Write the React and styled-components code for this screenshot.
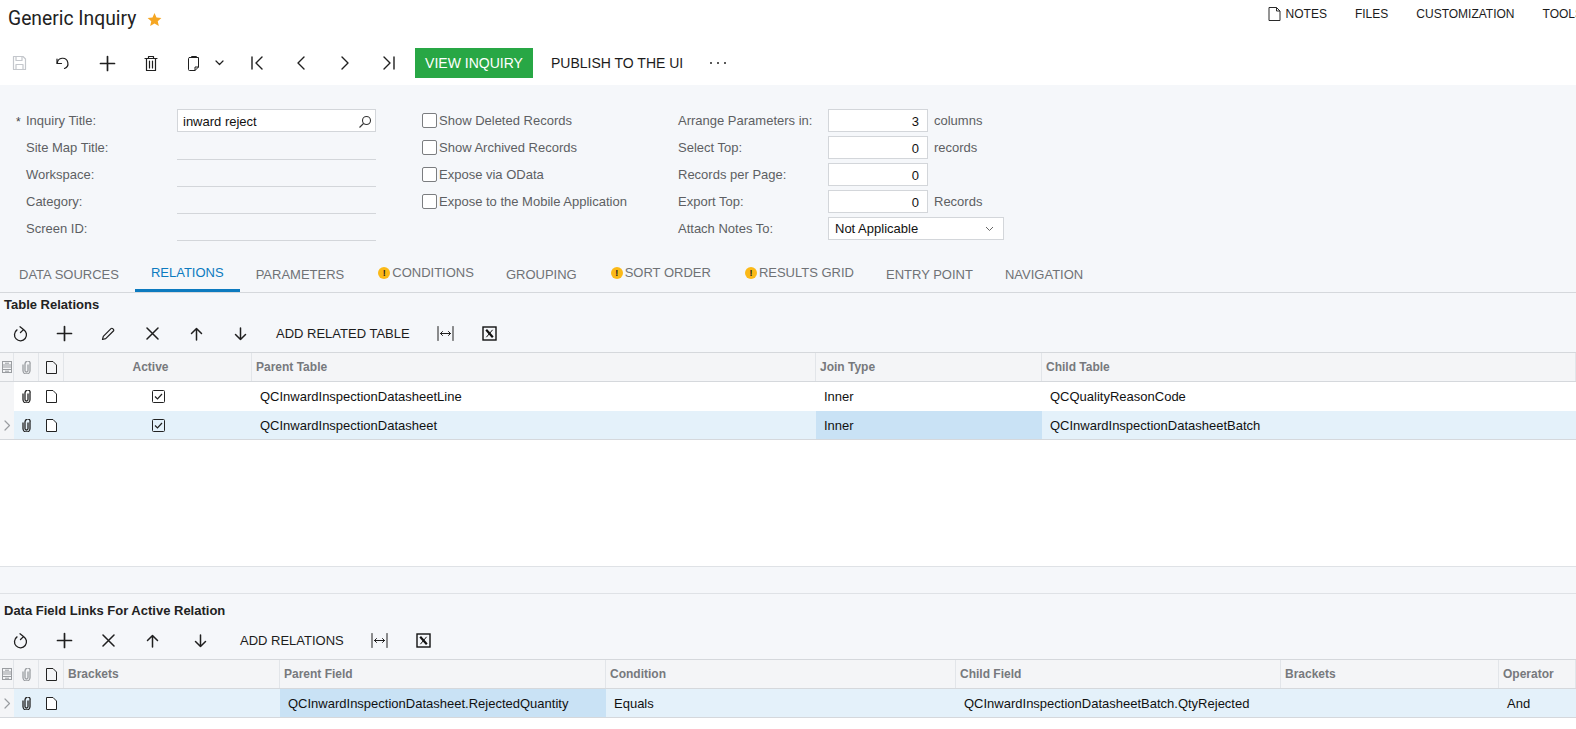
import React from 'react';
import styled, { createGlobalStyle } from 'styled-components';

const GlobalStyle = createGlobalStyle`
  html, body {
    margin: 0;
    height: 100%;
    overflow: hidden;
  }
  body {
    background: #f5f7fa;
    font-family: "Liberation Sans", Arial, sans-serif;
    font-size: 13px;
    color: #111;
  }
`;

const Page = styled.div`
  width: 1576px;
  height: 729px;
  overflow: hidden;
  display: flex;
  flex-direction: column;
`;

const Top = styled.div`
  background: #fff;
`;

const TitleBar = styled.div`
  height: 41px;
  display: flex;
  justify-content: space-between;
  align-items: flex-start;
`;

const TitleWrap = styled.div`
  display: flex;
  align-items: center;
  gap: 11px;
  padding: 7px 0 0 8px;
`;

const Title = styled.div`
  font-family: Roboto, sans-serif;
  font-size: 19.3px;
  line-height: 24px;
  color: #222;
`;

const TopLinks = styled.div`
  display: flex;
  margin-right: -7px;
  padding-top: 6px;
`;

const TopLink = styled.div`
  display: flex;
  align-items: center;
  gap: 5px;
  height: 16px;
  margin-left: ${p => p.$gap}px;
  font-size: 12px;
  color: #1c1c1c;
  white-space: nowrap;
`;

const MainBar = styled.div`
  height: 44px;
  display: flex;
  align-items: center;
`;

const IconButton = styled.div`
  width: ${p => p.$width || 44}px;
  height: 32px;
  box-sizing: border-box;
  flex: none;
  margin-left: ${p => p.$shift || 0}px;
  padding-left: ${p => p.$inset || 0}px;
  display: flex;
  align-items: center;
  justify-content: center;
  gap: 14px;
  color: ${p => p.$muted ? '#c4c7cc' : '#1f1f1f'};
`;

const PrimaryButton = styled.div`
  width: 118px;
  height: 30px;
  margin-left: 4px;
  background: #28a745;
  color: #fff;
  font-size: 14px;
  display: flex;
  align-items: center;
  justify-content: center;
`;

const TextButton = styled.div`
  padding: 0 ${p => p.$pad || 14}px;
  margin-left: ${p => p.$shift || 0}px;
  font-size: ${p => p.$size || 13}px;
  color: #1c1c1c;
  white-space: nowrap;
`;

const FormArea = styled.div`
  padding: 22px 0 13px 16px;
  display: flex;
`;

const FormColumn = styled.div`
  width: ${p => p.$width}px;
  display: flex;
  flex-direction: column;
`;

const FormRow = styled.div`
  height: 27px;
  display: grid;
  grid-template-columns: ${p => p.$cols};
  align-items: center;
`;

const Required = styled.span`
  font-size: 12px;
  color: #444;
  line-height: 12px;
  padding-top: 2px;
`;

const Label = styled.div`
  font-size: 13px;
  color: #5d5f63;
  white-space: nowrap;
`;

const Suffix = styled(Label)`
  padding-left: 6px;
`;

const TextBox = styled.div`
  height: 23px;
  box-sizing: border-box;
  background: #fff;
  border: 1px solid #d3d6da;
  display: flex;
  align-items: center;
  justify-content: ${p => p.$number ? 'flex-end' : 'space-between'};
  padding: 2px ${p => p.$number ? 8 : 3}px 0 ${p => p.$number ? 8 : 5}px;
  font-size: 13px;
  color: #111;
`;

const SelectBox = styled(TextBox)`
  width: 176px;
  padding: 0 9px 0 6px;
`;

const EmptyField = styled.div`
  height: 23px;
  align-self: start;
  margin-top: 2px;
  border-bottom: 1px solid #d3d6da;
`;

const CheckRow = styled.div`
  height: 27px;
  display: flex;
  align-items: center;
  gap: 2px;
  font-size: 13px;
  color: #5d5f63;
  white-space: nowrap;
`;

const CheckBox = styled.span`
  width: 13px;
  height: 13px;
  background: #fff;
  border: 1px solid #7b7d80;
  border-radius: 2px;
  flex: none;
`;

const TabBar = styled.div`
  height: 37px;
  padding-left: 3px;
  display: flex;
  border-bottom: 1px solid #d5d8dc;
`;

const Tab = styled.div`
  height: 37px;
  box-sizing: border-box;
  padding: ${p => p.$raised ? 10 : 12}px 16px 0 16px;
  display: flex;
  align-items: flex-start;
  gap: 2px;
  font-size: 13px;
  line-height: 16px;
  color: ${p => p.$active ? '#0c7abf' : '#6f7276'};
  border-bottom: ${p => p.$active ? '3px solid #0c7abf' : 'none'};
  white-space: nowrap;
`;

const Warn = styled.span`
  width: 12px;
  height: 12px;
  margin: 2px 0 0 2px;
  border-radius: 50%;
  background: #fbb917;
  color: #222;
  font-size: 9px;
  font-weight: bold;
  line-height: 12px;
  text-align: center;
`;

const SectionTitle = styled.div`
  height: ${p => p.$height}px;
  box-sizing: border-box;
  padding: ${p => p.$top || 0}px 0 0 4px;
  display: flex;
  align-items: center;
  font-size: 13px;
  font-weight: bold;
  color: #222;
`;

const GridBar = styled.div`
  height: ${p => p.$height}px;
  margin-left: -2px;
  display: flex;
  align-items: center;
`;

const GridRow = styled.div`
  height: ${p => p.$height || 29}px;
  box-sizing: border-box;
  display: grid;
  grid-template-columns: ${p => p.$cols};
  background: ${p => p.$bg};
  border-top: ${p => p.$top ? '1px solid #d5d8dc' : 'none'};
  border-bottom: ${p => p.$bottom ? '1px solid #d5d8dc' : 'none'};
`;

const HeadCell = styled.div`
  display: flex;
  align-items: center;
  justify-content: ${p => p.$center ? 'center' : 'flex-start'};
  padding: 0 ${p => p.$center ? 14 : 0}px 0 ${p => p.$center ? 0 : 4}px;
  border-right: 1px solid #e2e5e9;
  font-size: 12px;
  font-weight: bold;
  color: #77797d;
  overflow: hidden;
  white-space: nowrap;
`;

const IconCell = styled.div`
  display: flex;
  align-items: center;
  justify-content: center;
  color: ${p => p.$muted ? '#9a9da1' : '#222'};
  background: ${p => p.$gutter ? '#f4f5f7' : 'transparent'};
  border-right: ${p => p.$line ? '1px solid #e2e5e9' : 'none'};
`;

const Cell = styled.div`
  display: flex;
  align-items: center;
  padding-left: 8px;
  font-size: 13px;
  color: #111;
  background: ${p => p.$active ? '#c9e2f5' : 'transparent'};
  white-space: nowrap;
  overflow: hidden;
`;

const WhiteSpace = styled.div`
  height: 126px;
  background: #fff;
`;

const Splitter = styled.div`
  height: 26px;
  border-top: 1px solid #dfe2e6;
  border-bottom: 1px solid #dfe2e6;
`;

const BottomFill = styled.div`
  flex: 1;
  background: #fff;
`;

const Svg = ({ w = 16, h = 16, sw = 1.2, children }) => (
  <svg width={w} height={h} viewBox={`0 0 ${w} ${h}`} fill="none" stroke="currentColor" strokeWidth={sw} strokeLinecap="round" strokeLinejoin="round">
    {children}
  </svg>
);

const StarIcon = () => (
  <svg width="15" height="15" viewBox="0 0 24 24" fill="#f5a623">
    <path d="M12 1.5l3.2 7.1 7.8.8-5.8 5.2 1.7 7.7L12 18.4l-6.9 3.9 1.7-7.7L1 9.4l7.8-.8z" />
  </svg>
);
const NoteIcon = () => (
  <svg width="13" height="14" viewBox="0 0 13 14" fill="none" stroke="#2a2a2a" strokeWidth="1">
    <path d="M1 .5h7.5L12 4v9.5H1z" />
    <path d="M8.5.5V4H12" />
  </svg>
);
const SaveIcon = () => (
  <Svg w={15} h={16}>
    <path d="M1.5 1.5h9.5l2.5 2.5v10.500h-12z" />
    <path d="M4 1.5v4h6v-4M4 14.5v-5h7v5" />
  </Svg>
);
const UndoIcon = () => (
  <Svg>
    <path d="M2 4v4.5h4.5" />
    <path d="M2.3 8.3A5.3 5.3 0 1 1 9.5 13.5" />
  </Svg>
);
const PlusIcon = () => (
  <Svg w={17} h={17} sw={1.7}>
    <path d="M8.5 1.5v14M1.5 8.5h14" />
  </Svg>
);
const TrashIcon = () => (
  <Svg w={14} h={17}>
    <path d="M1 3.5h12M4.5 3.5v-2h5v2M2.5 3.5v12h9v-12M5.5 6v7M8.5 6v7" />
  </Svg>
);
const ClipboardIcon = () => (
  <Svg w={14} h={17} sw={1}>
    <path d="M2.5 2.5h9v9.5l-3.5 3.5h-5.5a1 1 0 0 1-1-1v-11a1 1 0 0 1 1-1z" />
    <path d="M8 15.5v-3.5h3.5M4.5 2.5v-1h5v1" />
  </Svg>
);
const SmallChevron = () => (
  <Svg w={9} h={6}>
    <path d="M1 1l3.5 3.5L8 1" />
  </Svg>
);
const FirstIcon = () => (
  <Svg w={14} h={14} sw={1.4}>
    <path d="M2 1v12M12 1L6 7l6 6" />
  </Svg>
);
const PrevIcon = () => (
  <Svg w={8} h={14} sw={1.4}>
    <path d="M7 1L1 7l6 6" />
  </Svg>
);
const NextIcon = () => (
  <Svg w={8} h={14} sw={1.4}>
    <path d="M1 1l6 6-6 6" />
  </Svg>
);
const LastIcon = () => (
  <Svg w={14} h={14} sw={1.4}>
    <path d="M12 1v12M2 1l6 6-6 6" />
  </Svg>
);
const DotsIcon = () => (
  <svg width="18" height="4" viewBox="0 0 18 4" fill="#222">
    <circle cx="2" cy="2" r="1" />
    <circle cx="9" cy="2" r="1" />
    <circle cx="16" cy="2" r="1" />
  </svg>
);
const SearchIcon = () => (
  <svg width="14" height="14" viewBox="0 0 14 14" fill="none" stroke="#333" strokeWidth="1.1">
    <circle cx="8.5" cy="5.5" r="4" />
    <path d="M5.5 8.5L1.5 12.5" />
  </svg>
);
const RefreshIcon = () => (
  <Svg w={15} h={16} sw={1.3}>
    <path d="M10.5 3.6A6 6 0 1 1 4 3.9" />
    <path d="M7 .8l3.5 2.8L7.5 6.5" />
  </Svg>
);
const PencilIcon = () => (
  <Svg w={14} h={14}>
    <path d="M1.5 12.5l.8-3.2L10 1.6a1.2 1.2 0 0 1 1.7 0l.7.7a1.2 1.2 0 0 1 0 1.7l-7.7 7.7z" />
  </Svg>
);
const CrossIcon = () => (
  <Svg w={13} h={13} sw={1.5}>
    <path d="M1 1l11 11M12 1L1 12" />
  </Svg>
);
const UpIcon = () => (
  <Svg w={13} h={14} sw={1.5}>
    <path d="M6.5 13V1.5M1.5 6.5l5-5 5 5" />
  </Svg>
);
const DownIcon = () => (
  <Svg w={13} h={14} sw={1.5}>
    <path d="M6.5 1v11.5M1.5 7.5l5 5 5-5" />
  </Svg>
);
const FitIcon = () => (
  <Svg w={17} h={15} sw={1}>
    <path d="M1 .5v14M16 .5v14M3.5 7.5h10M3.5 7.5l2-2M3.5 7.5l2 2M13.5 7.5l-2-2M13.5 7.5l-2 2" />
  </Svg>
);
const ExcelIcon = () => (
  <svg width="15" height="15" viewBox="0 0 15 15" fill="none" stroke="#111">
    <rect x="1" y="1" width="13" height="13" strokeWidth="1.4" />
    <path d="M4.2 3.8l6.6 7.4" strokeWidth="2.2" />
    <path d="M10.6 3.8l-6.2 7.4" strokeWidth="1" />
  </svg>
);
const GridIcon = () => (
  <svg width="10" height="12" viewBox="0 0 10 12" fill="none" stroke="currentColor">
    <rect x=".5" y=".5" width="9" height="11" />
    <path d="M.5 4h9M.5 6h9M.5 8.5h9M3 2.2h4M3 10.2h4" />
  </svg>
);
const ClipIcon = () => (
  <svg width="9" height="13" viewBox="0 0 9 13" fill="none" stroke="currentColor" strokeWidth="1.3">
    <path d="M6 3.5v6a1.5 1.5 0 0 1-3 0V3a2 2 0 0 1 .6-1.5A2.2 2.2 0 0 1 8 3v6.5a3.5 3.5 0 0 1-7 0V3.5" />
  </svg>
);
const PageIcon = () => (
  <svg width="11" height="13" viewBox="0 0 11 13" fill="#fff" stroke="#222">
    <path d="M.5.5h6.5L10.5 4v8.5H.5z" />
  </svg>
);
const HeadPageIcon = () => (
  <svg width="11" height="13" viewBox="0 0 11 13" fill="none" stroke="#222">
    <path d="M.5.5h6.5L10.5 4v8.5H.5z" />
  </svg>
);
const RowArrow = () => (
  <Svg w={7} h={11} sw={1.2}>
    <path d="M1 1l4.5 4.5L1 10" />
  </Svg>
);
const CheckedIcon = () => (
  <svg width="13" height="13" viewBox="0 0 13 13" fill="none" stroke="#222">
    <rect x=".5" y=".5" width="12" height="12" rx="1" />
    <path d="M3 6.5l2.5 2.5L10 4" strokeWidth="1.2" />
  </svg>
);
const DropIcon = () => (
  <svg width="9" height="6" viewBox="0 0 9 6" fill="none" stroke="#666">
    <path d="M1 1l3.5 3.5L8 1" />
  </svg>
);

const leftFields = ['Site Map Title:', 'Workspace:', 'Category:', 'Screen ID:'];
const checks = ['Show Deleted Records', 'Show Archived Records', 'Expose via OData', 'Expose to the Mobile Application'];
const numbers = [
  { label: 'Arrange Parameters in:', value: 3, suffix: 'columns' },
  { label: 'Select Top:', value: 0, suffix: 'records' },
  { label: 'Records per Page:', value: 0, suffix: '' },
  { label: 'Export Top:', value: 0, suffix: 'Records' },
];
const tabs = [
  { name: 'DATA SOURCES' },
  { name: 'RELATIONS', active: true },
  { name: 'PARAMETERS' },
  { name: 'CONDITIONS', warn: true },
  { name: 'GROUPING' },
  { name: 'SORT ORDER', warn: true },
  { name: 'RESULTS GRID', warn: true },
  { name: 'ENTRY POINT' },
  { name: 'NAVIGATION' },
];

const relationCols = '14px 25px 25px 188px 564px 226px 1fr';
const linkCols = '14px 25px 25px 216px 326px 350px 325px 218px 1fr';
const fieldCols = '10px 151px 199px';

const HeadIcons = () => (
  <>
    <IconCell $muted $line><GridIcon /></IconCell>
    <IconCell $muted $line><ClipIcon /></IconCell>
    <IconCell $line><HeadPageIcon /></IconCell>
  </>
);

const RowIcons = ({ selected }) => (
  <>
    <IconCell $gutter $muted>{selected && <RowArrow />}</IconCell>
    <IconCell><ClipIcon /></IconCell>
    <IconCell><PageIcon /></IconCell>
  </>
);

const App = () => {
  return (
    <Page>
      <GlobalStyle />
      <Top>
        <TitleBar>
          <TitleWrap>
            <Title>Generic Inquiry</Title>
            <StarIcon />
          </TitleWrap>
          <TopLinks>
            <TopLink $gap={0}><NoteIcon />NOTES</TopLink>
            <TopLink $gap={28}>FILES</TopLink>
            <TopLink $gap={28}>CUSTOMIZATION</TopLink>
            <TopLink $gap={28}>TOOLS</TopLink>
          </TopLinks>
        </TitleBar>
        <MainBar>
          <IconButton $muted $shift={-3}><SaveIcon /></IconButton>
          <IconButton><UndoIcon /></IconButton>
          <IconButton><PlusIcon /></IconButton>
          <IconButton><TrashIcon /></IconButton>
          <IconButton $width={62} $inset={3}><ClipboardIcon /><SmallChevron /></IconButton>
          <IconButton><FirstIcon /></IconButton>
          <IconButton><PrevIcon /></IconButton>
          <IconButton><NextIcon /></IconButton>
          <IconButton><LastIcon /></IconButton>
          <PrimaryButton>VIEW INQUIRY</PrimaryButton>
          <TextButton $pad={18} $size={14}>PUBLISH TO THE UI</TextButton>
          <IconButton $width={34}><DotsIcon /></IconButton>
        </MainBar>
      </Top>

      <FormArea>
        <FormColumn $width={406}>
          <FormRow $cols={fieldCols}>
            <Required>*</Required>
            <Label>Inquiry Title:</Label>
            <TextBox>inward reject<SearchIcon /></TextBox>
          </FormRow>
          {leftFields.map(field => (
            <FormRow key={field} $cols={fieldCols}>
              <span />
              <Label>{field}</Label>
              <EmptyField />
            </FormRow>
          ))}
        </FormColumn>
        <FormColumn $width={256}>
          {checks.map(check => (
            <CheckRow key={check}><CheckBox />{check}</CheckRow>
          ))}
        </FormColumn>
        <FormColumn $width={400}>
          {numbers.map(row => (
            <FormRow key={row.label} $cols="150px 100px 80px">
              <Label>{row.label}</Label>
              <TextBox $number>{row.value}</TextBox>
              <Suffix>{row.suffix}</Suffix>
            </FormRow>
          ))}
          <FormRow $cols="150px 176px">
            <Label>Attach Notes To:</Label>
            <SelectBox>Not Applicable<DropIcon /></SelectBox>
          </FormRow>
        </FormColumn>
      </FormArea>

      <TabBar>
        {tabs.map(tab => (
          <Tab key={tab.name} $active={tab.active} $raised={tab.active || tab.warn}>
            {tab.warn && <Warn>!</Warn>}
            {tab.name}
          </Tab>
        ))}
      </TabBar>

      <SectionTitle $height={22}>Table Relations</SectionTitle>
      <GridBar $height={37}>
        <IconButton><RefreshIcon /></IconButton>
        <IconButton><PlusIcon /></IconButton>
        <IconButton><PencilIcon /></IconButton>
        <IconButton><CrossIcon /></IconButton>
        <IconButton><UpIcon /></IconButton>
        <IconButton><DownIcon /></IconButton>
        <TextButton>ADD RELATED TABLE</TextButton>
        <IconButton><FitIcon /></IconButton>
        <IconButton><ExcelIcon /></IconButton>
      </GridBar>

      <GridRow $cols={relationCols} $top $bottom $height={30} $bg="#f4f5f7">
        <HeadIcons />
        <HeadCell $center>Active</HeadCell>
        <HeadCell>Parent Table</HeadCell>
        <HeadCell>Join Type</HeadCell>
        <HeadCell>Child Table</HeadCell>
      </GridRow>
      <GridRow $cols={relationCols} $bg="#fff">
        <RowIcons />
        <IconCell><CheckedIcon /></IconCell>
        <Cell>QCInwardInspectionDatasheetLine</Cell>
        <Cell>Inner</Cell>
        <Cell>QCQualityReasonCode</Cell>
      </GridRow>
      <GridRow $cols={relationCols} $bottom $bg="#e4f1fa">
        <RowIcons selected />
        <IconCell><CheckedIcon /></IconCell>
        <Cell>QCInwardInspectionDatasheet</Cell>
        <Cell $active>Inner</Cell>
        <Cell>QCInwardInspectionDatasheetBatch</Cell>
      </GridRow>
      <WhiteSpace />
      <Splitter />

      <SectionTitle $height={28} $top={5}>Data Field Links For Active Relation</SectionTitle>
      <GridBar $height={37}>
        <IconButton><RefreshIcon /></IconButton>
        <IconButton><PlusIcon /></IconButton>
        <IconButton><CrossIcon /></IconButton>
        <IconButton><UpIcon /></IconButton>
        <IconButton $shift={4}><DownIcon /></IconButton>
        <TextButton $shift={4}>ADD RELATIONS</TextButton>
        <IconButton><FitIcon /></IconButton>
        <IconButton><ExcelIcon /></IconButton>
      </GridBar>
      <GridRow $cols={linkCols} $top $bottom $height={30} $bg="#f4f5f7">
        <HeadIcons />
        <HeadCell>Brackets</HeadCell>
        <HeadCell>Parent Field</HeadCell>
        <HeadCell>Condition</HeadCell>
        <HeadCell>Child Field</HeadCell>
        <HeadCell>Brackets</HeadCell>
        <HeadCell>Operator</HeadCell>
      </GridRow>
      <GridRow $cols={linkCols} $bottom $bg="#e4f1fa">
        <RowIcons selected />
        <Cell />
        <Cell $active>QCInwardInspectionDatasheet.RejectedQuantity</Cell>
        <Cell>Equals</Cell>
        <Cell>QCInwardInspectionDatasheetBatch.QtyRejected</Cell>
        <Cell />
        <Cell>And</Cell>
      </GridRow>
      <BottomFill />
    </Page>
  );
};

export default App;
